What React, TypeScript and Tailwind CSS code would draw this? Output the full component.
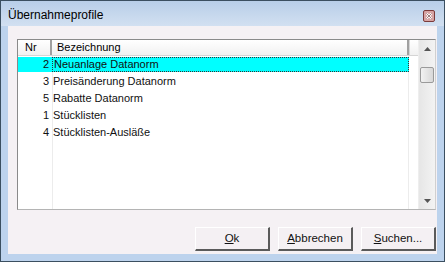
const rows = [
    { nr: 2, name: 'Neuanlage Datanorm' },
    { nr: 3, name: 'Preisänderung Datanorm' },
    { nr: 5, name: 'Rabatte Datanorm' },
    { nr: 1, name: 'Stücklisten' },
    { nr: 4, name: 'Stücklisten-Ausläße' },
]

function Button({ label, hot }: { label: string, hot: string }) {
    const rest = label.slice(1)
    return (
        <button
            className="w-[75px] h-[24px] bg-[#f4f0f3] border-t border-l border-t-white border-l-white
                       border-r-2 border-b-2 border-r-[#5a5a5a] border-b-[#5a5a5a] flex items-center justify-center
                       text-[11.5px] text-[#111]"
        >
            <span><span className="underline">{hot}</span>{rest}</span>
        </button>
    )
}

function App() {
    return (
        <div
            className="w-[445px] h-[262px] border border-[#3b4f60] bg-[#bdd3ed] flex flex-col"
            style={{ fontFamily: '"Liberation Sans", Arial, sans-serif' }}
        >
            <div className="h-[25px] flex items-center justify-between pl-[7px] pr-[9px] bg-gradient-to-b from-[#b8cee8] to-[#d2e0f1]">
                <span className="text-[12px] text-black pt-[2px]">Übernahmeprofile</span>
                <div className="w-[12px] h-[12px] mt-[5px] rounded-[2px] border border-[#7b3b3b] bg-[#d7a4a4] flex items-center justify-center">
                    <svg width="8" height="8" viewBox="0 0 8 8">
                        <path d="M1.5 1.5 L6.5 6.5 M6.5 1.5 L1.5 6.5" stroke="#fff" strokeWidth="2" />
                        <path d="M1.5 1.5 L6.5 6.5 M6.5 1.5 L1.5 6.5" stroke="#5a2a2a" strokeWidth="0.6" />
                    </svg>
                </div>
            </div>

            <div className="mx-[7px] mb-[7px] flex-1 bg-[#f5f1f4] flex flex-col">
                {/* Liste */}
                <div className="mt-[13px] ml-[9px] mr-[1px] h-[171px] border border-[#8a8a8a] border-b-[#b4b4b4] border-r-[#d0d0d0] bg-white flex">
                    <div className="flex-1 flex flex-col relative">
                        <div className="h-[16px] flex bg-gradient-to-b from-white to-[#f1f1f1] border-b border-[#d5d5d5] text-[11px] text-black">
                            <div className="w-[34px] pl-[7px] flex items-center border-r-2 border-r-[#a0a0a0]">Nr</div>
                            <div className="w-[357px] pl-[5px] flex items-center border-r-2 border-r-[#a0a0a0]">Bezeichnung</div>
                            <div className="flex-1 border-l border-[#d5d5d5]"></div>
                        </div>
                        <div className="absolute left-[34px] top-[16px] bottom-0 w-px bg-[#ececec]"></div>
                        <div className="absolute left-[390px] top-[16px] bottom-0 w-px bg-[#ececec]"></div>
                        <div className="flex flex-col text-[11px] text-[#111]">
                            {rows.map((row, i) => (
                                <div key={row.nr} className="h-[17px] w-[391px] py-[1px] relative">
                                    <div className={`h-[15px] flex items-center ${i === 0 ? 'bg-[#00ffff]' : ''}`}>
                                        <div className="w-[34px] text-right pr-[3px]">{row.nr}</div>
                                        <div
                                            className={`flex-1 h-full flex items-center pl-[1px] ${i === 0 ? 'border border-dotted border-[#333]' : ''}`}
                                        >
                                            {row.name}
                                        </div>
                                    </div>
                                </div>
                            ))}
                        </div>
                    </div>

                    {/* Scrollbar */}
                    <div className="w-[17px] flex flex-col bg-gradient-to-r from-[#e6e6e6] to-[#f3f3f3] border-l border-[#eeeeee]">
                        <div className="h-[17px] flex items-center justify-center">
                            <svg width="7" height="4" viewBox="0 0 7 4"><path d="M3.5 0 L7 4 L0 4 Z" fill="#555" /></svg>
                        </div>
                        <div className="mt-[10px] mx-[1px] h-[16px] rounded-[2px] border border-[#9a9a9a] bg-gradient-to-r from-[#f2f2f2] to-[#d8d8d8]"></div>
                        <div className="flex-1"></div>
                        <div className="h-[17px] flex items-center justify-center">
                            <svg width="7" height="4" viewBox="0 0 7 4"><path d="M0 0 L7 0 L3.5 4 Z" fill="#555" /></svg>
                        </div>
                    </div>
                </div>

                <div className="mt-[17px] mr-[1px] flex justify-end gap-[8px]">
                    <Button label="Ok" hot="O" />
                    <Button label="Abbrechen" hot="A" />
                    <Button label="Suchen..." hot="S" />
                </div>
            </div>
        </div>
    )
}

export default App
